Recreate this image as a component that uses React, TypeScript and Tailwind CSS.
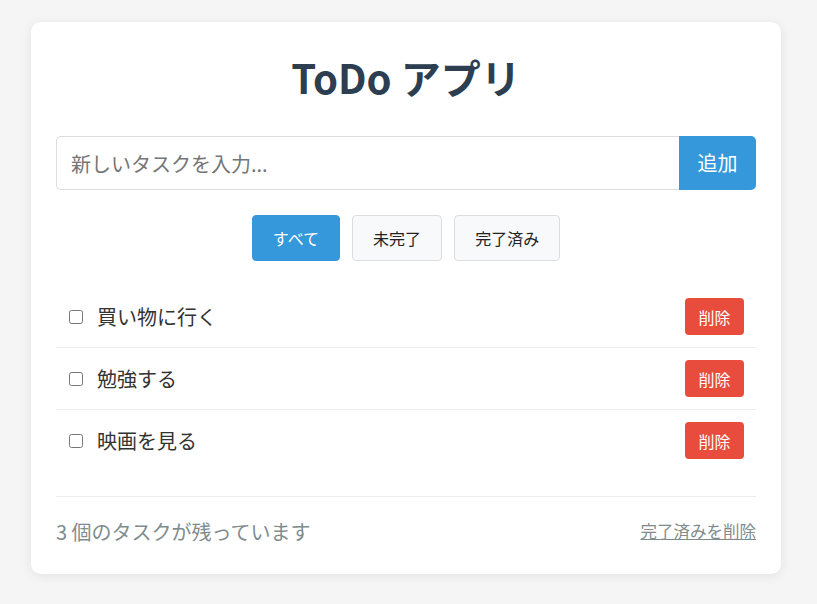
import { useState } from 'react';

type Todo = {
  id: number;
  text: string;
  done: boolean;
};

type Filter = 'all' | 'active' | 'done';

const FILTERS: { key: Filter; label: string }[] = [
  { key: 'all', label: 'すべて' },
  { key: 'active', label: '未完了' },
  { key: 'done', label: '完了済み' },
];

const App = () => {
  const [todos, setTodos] = useState<Todo[]>([
    { id: 1, text: '買い物に行く', done: false },
    { id: 2, text: '勉強する', done: false },
    { id: 3, text: '映画を見る', done: false },
  ]);
  const [input, setInput] = useState('');
  const [filter, setFilter] = useState<Filter>('all');

  const addTodo = () => {
    const text = input.trim();
    if (!text) return;
    setTodos(prev => [...prev, { id: Date.now(), text, done: false }]);
    setInput('');
  };

  const toggle = (id: number) =>
    setTodos(prev => prev.map(t => (t.id === id ? { ...t, done: !t.done } : t)));

  const remove = (id: number) => setTodos(prev => prev.filter(t => t.id !== id));

  const clearDone = () => setTodos(prev => prev.filter(t => !t.done));

  const visible = todos.filter(t =>
    filter === 'all' ? true : filter === 'active' ? !t.done : t.done
  );
  const remaining = todos.filter(t => !t.done).length;

  return (
    <div
      className="min-h-screen bg-[#f5f5f5] pl-[31px] pt-[22px] pb-[30px]"
      style={{ fontFamily: '"Noto Sans CJK JP", "Noto Sans", sans-serif' }}
    >
      <div className="w-[750px] rounded-[10px] bg-white px-[25px] pt-[25px] pb-[28px] shadow-[0_2px_12px_rgba(0,0,0,0.08)]">
        {/* Title */}
        <h1 className="mt-[3px] mb-[32px] text-center text-[40px] leading-[54px] font-bold text-[#2c3e50]">
          ToDo アプリ
        </h1>

        {/* New task input */}
        <div className="flex">
          <input
            value={input}
            onChange={e => setInput(e.target.value)}
            onKeyDown={e => e.key === 'Enter' && addTodo()}
            placeholder="新しいタスクを入力..."
            className="h-[54px] flex-1 rounded-l-[5px] border border-r-0 border-[#dddddd] px-[14px] text-[20px] text-[#333] outline-none placeholder:text-[#757575]"
          />
          <button
            onClick={addTodo}
            className="h-[54px] w-[77px] rounded-r-[5px] bg-[#3498db] text-[20px] text-white"
          >
            追加
          </button>
        </div>

        {/* Filters */}
        <div className="mt-[25px] flex justify-center gap-[12px]">
          {FILTERS.map(f => (
            <button
              key={f.key}
              onClick={() => setFilter(f.key)}
              className={
                filter === f.key
                  ? 'h-[46px] rounded-[4px] border border-[#3498db] bg-[#3498db] px-[20px] text-[16px] text-white'
                  : 'h-[46px] rounded-[4px] border border-[#dddddd] bg-[#f8f9fa] px-[20px] text-[16px] text-[#222]'
              }
            >
              {f.label}
            </button>
          ))}
        </div>

        {/* Task list */}
        <ul className="mt-[25px] mb-[25px]">
          {visible.map((t, i) => (
            <li
              key={t.id}
              className={
                'flex items-center px-[12px] py-[12px] ' +
                (i < visible.length - 1 ? 'border-b border-[#eeeeee]' : '')
              }
            >
              <input
                type="checkbox"
                checked={t.done}
                onChange={() => toggle(t.id)}
                className="ml-[1px] h-[14px] w-[14px]"
              />
              <span
                className={
                  'ml-[14px] flex-1 text-[20px] leading-[28px] ' +
                  (t.done ? 'text-[#999] line-through' : 'text-[#333]')
                }
              >
                {t.text}
              </span>
              <button
                onClick={() => remove(t.id)}
                className="h-[37px] w-[59px] rounded-[4px] bg-[#e74c3c] text-[16px] text-white"
              >
                削除
              </button>
            </li>
          ))}
        </ul>

        {/* Footer */}
        <div className="flex items-center justify-between border-t border-[#eeeeee] pt-[20px]">
          <span className="text-[20px] leading-[29px] text-[#7f8c8d]">
            {remaining} 個のタスクが残っています
          </span>
          <button onClick={clearDone} className="text-[16.5px] text-[#7f8c8d] underline">
            完了済みを削除
          </button>
        </div>
      </div>
    </div>
  );
};

export default App;
